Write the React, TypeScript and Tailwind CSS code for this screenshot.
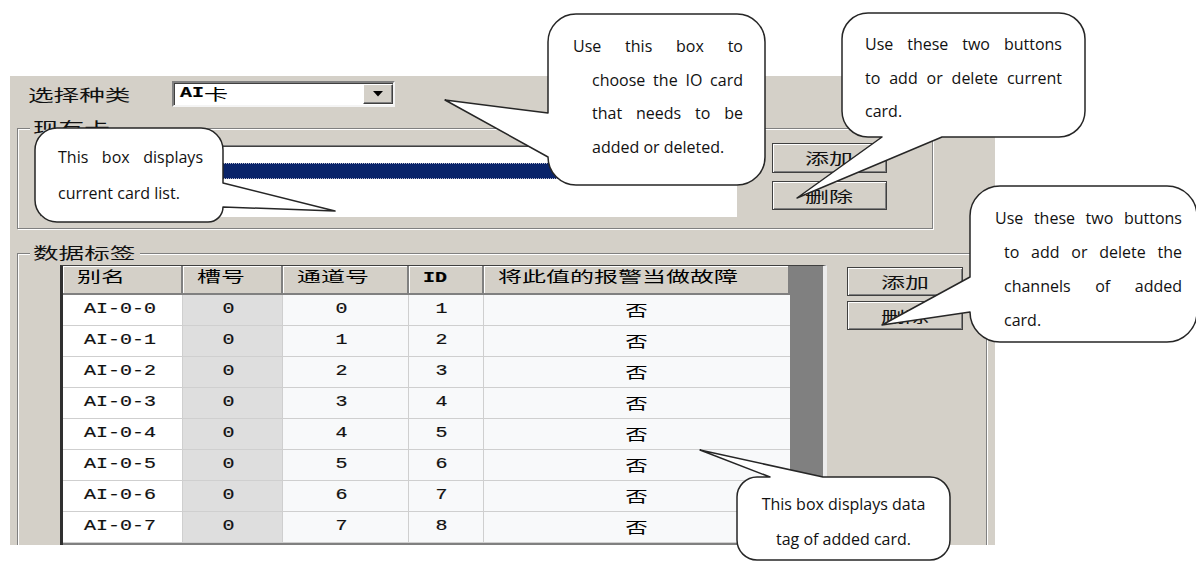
import React from "react";

const CN = "font-['Noto_Sans_CJK_SC',sans-serif]";
const MONO = "font-['Liberation_Mono','Noto_Sans_CJK_SC',monospace] [-webkit-text-stroke:0.2px_#111]";
const NOTE = "font-['Open_Sans','Noto_Sans',sans-serif]";

function Btn({ label, h }: { label: string; h: string }) {
  return (
    <div
      className={`w-full ${h} bg-[#d4d0c8] border border-[#404040] shadow-[inset_1px_1px_0_#ffffff,inset_-1px_-1px_0_#808080] flex items-center justify-center text-[15px] leading-[18px] text-[#111] ${CN}`}
    >
      <span className="inline-block scale-x-[1.6]">{label}</span>
    </div>
  );
}

function GroupLabel({ text, w }: { text: string; w: string }) {
  return (
    <div
      className={`-mt-[10px] ml-[12px] ${w} h-[17px] pl-[3px] bg-[#d4d0c8] text-[16px] leading-[17px] text-[#111] ${CN}`}
    >
      <span className="inline-block origin-left scale-x-[1.6]">{text}</span>
    </div>
  );
}

function Combo() {
  return (
    <div className="w-[223px] h-[26px] bg-white border-2 border-t-[#808080] border-l-[#808080] border-r-[#f4f4f4] border-b-[#f4f4f4] shadow-[inset_1px_1px_0_#404040] flex items-center">
      <div className="pl-[6px] flex items-center leading-[18px] text-black">
        <span className={`inline-block origin-left scale-x-[1.33] w-[24px] text-[15px] font-bold ${MONO}`}>AI</span>
        <span className={`inline-block origin-left scale-x-[1.6] text-[15px] ${CN}`}>卡</span>
      </div>
      <div className="ml-auto w-[30px] h-[20px] bg-[#d4d0c8] border border-t-white border-l-white border-r-[#404040] border-b-[#404040] shadow-[inset_-1px_-1px_0_#808080] flex items-center justify-center">
        <svg width="10" height="6" viewBox="0 0 10 6">
          <polygon points="0,0 10,0 5,5.5" fill="#000" />
        </svg>
      </div>
    </div>
  );
}

function Group1() {
  return (
    <div className="shrink-0 mt-[21px] ml-[7px] w-[916px] h-[101px] border border-[#808080] shadow-[inset_1px_1px_0_#ffffff,1px_1px_0_#ffffff] flex flex-col">
      <GroupLabel text="现有卡" w="w-[84px]" />
      <div className="flex items-start">
        <div className="ml-[22px] mt-[9px] w-[697px] h-[72px] bg-white border border-t-[#808080] border-l-[#808080] border-r-white border-b-white shadow-[inset_1px_1px_0_#404040] pt-[1px] pl-[1px] overflow-hidden">
          <div className={`h-[16px] pl-[4px] text-[14px] leading-[16px] text-black whitespace-nowrap ${CN}`}>
            <span className="inline-block origin-left scale-x-[1.2]">DI卡 数字量输入 槽号:1</span>
          </div>
          <div className={`h-[16px] mr-[1px] pl-[4px] bg-[#0a246a] outline outline-1 outline-dotted outline-[#b8b8c8] -outline-offset-1 text-[14px] leading-[16px] text-white whitespace-nowrap ${CN}`}>
            <span className="inline-block origin-left scale-x-[1.2]">AI卡 模拟量输入(槽号0)</span>
          </div>
        </div>
        <div className="ml-[35px] mt-[7px] w-[115px] flex flex-col gap-[8px]">
          <Btn label="添加" h="h-[30px]" />
          <Btn label="删除" h="h-[29px]" />
        </div>
      </div>
    </div>
  );
}

const cols = [
  { name: "别名", w: "w-[120px]" },
  { name: "槽号", w: "w-[100px]" },
  { name: "通道号", w: "w-[126px]" },
  { name: "ID", w: "w-[75px]" },
  { name: "将此值的报警当做故障", w: "w-[306px]" },
];

function Table() {
  const rows = Array.from({ length: 8 }, (_, i) => i);
  return (
    <div className="ml-[42px] w-[767px] h-[290px] flex border-l-[3px] border-l-[#303030] border-t border-t-[#404040] border-r-[4px] border-r-[#ececec] bg-[#808080]">
      <div className="w-[727px] shrink-0 flex flex-col">
        <div className="flex h-[29px]">
          {cols.map((c) => (
            <div
              key={c.name}
              className={`${c.w} h-[29px] shrink-0 bg-[#d4d0c8] border-b-2 border-b-[#808080] border-r-2 border-r-[#808080] shadow-[inset_1px_1px_0_#ffffff] pl-[14px] pt-[1px] leading-[18px] text-black`}
            >
              {c.name === "ID" ? (
                <span className={`inline-block origin-left scale-x-[1.33] text-[15px] font-bold ${MONO}`}>ID</span>
              ) : (
                <span className={`inline-block origin-left scale-x-[1.6] text-[15px] ${CN}`}>{c.name}</span>
              )}
            </div>
          ))}
        </div>
        {rows.map((i) => (
          <div key={i} className="flex h-[31px]">
            <div className="w-[120px] bg-white border-b border-r border-[#cfcfcf] flex items-center justify-center pr-[4px]">
              <span className={`inline-block scale-x-[1.33] text-[15px] text-[#111] ${MONO}`}>{`AI-0-${i}`}</span>
            </div>
            <div className="w-[100px] bg-[#dedede] border-b border-r border-[#cfcfcf] flex items-center justify-center pr-[8px]">
              <span className={`inline-block scale-x-[1.33] text-[15px] text-[#111] ${MONO}`}>0</span>
            </div>
            <div className="w-[126px] bg-[#f8f9fa] border-b border-r border-[#cfcfcf] flex items-center justify-center pr-[8px]">
              <span className={`inline-block scale-x-[1.33] text-[15px] text-[#111] ${MONO}`}>{i}</span>
            </div>
            <div className="w-[75px] bg-[#f8f9fa] border-b border-r border-[#cfcfcf] flex items-center justify-center pr-[8px]">
              <span className={`inline-block scale-x-[1.33] text-[15px] text-[#111] ${MONO}`}>{i + 1}</span>
            </div>
            <div className="w-[306px] bg-[#f8f9fa] border-b border-[#cfcfcf] flex items-center justify-center">
              <span className={`inline-block scale-x-[1.5] text-[15px] text-black ${CN}`}>否</span>
            </div>
          </div>
        ))}
      </div>
      <div className="w-[33px] shrink-0 bg-[#808080]" />
    </div>
  );
}

function Group2() {
  return (
    <div className="shrink-0 mt-[24px] ml-[7px] w-[970px] h-[320px] border border-[#808080] shadow-[inset_1px_1px_0_#ffffff,1px_1px_0_#ffffff] flex flex-col">
      <GroupLabel text="数据标签" w="w-[110px]" />
      <div className="flex items-start mt-[4px]">
        <Table />
        <div className="ml-[20px] mt-[2px] w-[116px] flex flex-col gap-[5px]">
          <Btn label="添加" h="h-[29px]" />
          <Btn label="删除" h="h-[29px]" />
        </div>
      </div>
    </div>
  );
}

function Callouts() {
  const common = {
    fill: "#ffffff",
    stroke: "#262626",
    strokeWidth: 1.5,
    strokeLinejoin: "round" as const,
  };
  return (
    <>
      <svg
        className="absolute left-0 top-0 pointer-events-none"
        width="1196"
        height="561"
        viewBox="0 0 1196 561"
      >
        <path
          {...common}
          d="M576,14 H737 A28,28 0 0 1 765,42 V157 A28,28 0 0 1 737,185 H576 A28,28 0 0 1 548,157 L445,100 L548,113 V42 A28,28 0 0 1 576,14 Z"
        />
        <path
          {...common}
          d="M868,13 H1059 A26,26 0 0 1 1085,39 V111 A26,26 0 0 1 1059,137 H942 L797,198 L882,137 H868 A26,26 0 0 1 842,111 V39 A26,26 0 0 1 868,13 Z"
        />
        <path
          {...common}
          d="M1000,186 H1167 A30,30 0 0 1 1197,216 V312 A30,30 0 0 1 1167,342 H1000 A30,30 0 0 1 970,312 L882,325 L970,277 V216 A30,30 0 0 1 1000,186 Z"
        />
        <path
          {...common}
          d="M57,128 H201 A22,22 0 0 1 223,150 V183 L335,211 L223,207 A15,15 0 0 1 208,222 H57 A22,22 0 0 1 35,200 V150 A22,22 0 0 1 57,128 Z"
        />
        <path
          {...common}
          d="M757,477 H770 L700,450 L823,477 H930 A20,20 0 0 1 950,497 V540 A20,20 0 0 1 930,560 H757 A20,20 0 0 1 737,540 V497 A20,20 0 0 1 757,477 Z"
        />
      </svg>

      <div className={`absolute left-[573px] top-[30px] w-[170px] text-[16px] leading-[33.5px] text-[#111] ${NOTE}`}>
        <div className="text-justify [text-align-last:justify]">Use this box to</div>
        <div className="pl-[19px] text-justify [text-align-last:justify]">choose the IO card</div>
        <div className="pl-[19px] text-justify [text-align-last:justify]">that needs to be</div>
        <div className="pl-[19px]">added or deleted.</div>
      </div>

      <div className={`absolute left-[865px] top-[28px] w-[197px] text-[16px] leading-[33.5px] text-[#111] ${NOTE}`}>
        <div className="text-justify [text-align-last:justify]">Use these two buttons</div>
        <div className="text-justify [text-align-last:justify]">to add or delete current</div>
        <div>card.</div>
      </div>

      <div className={`absolute left-[995px] top-[201px] w-[187px] text-[16px] leading-[34px] text-[#111] ${NOTE}`}>
        <div className="text-justify [text-align-last:justify]">Use these two buttons</div>
        <div className="pl-[9px] text-justify [text-align-last:justify]">to add or delete the</div>
        <div className="pl-[9px] text-justify [text-align-last:justify]">channels of added</div>
        <div className="pl-[9px]">card.</div>
      </div>

      <div className={`absolute left-[58px] top-[139px] w-[145px] text-[16px] leading-[36px] text-[#111] ${NOTE}`}>
        <div className="text-justify [text-align-last:justify]">This box displays</div>
        <div>current card list.</div>
      </div>

      <div className={`absolute left-[737px] top-[487px] w-[213px] text-center text-[16px] leading-[35px] text-[#111] ${NOTE}`}>
        <div>This box displays data</div>
        <div>tag of added card.</div>
      </div>
    </>
  );
}

export default function App() {
  return (
    <div className="relative w-[1196px] h-[561px] bg-white overflow-hidden">
      <div className="ml-[10px] mt-[76px] w-[985px] h-[469px] bg-[#d4d0c8] overflow-hidden flex flex-col">
        <div className="shrink-0 mt-[5px] h-[26px] flex items-center">
          <div className={`w-[162px] pl-[18px] text-[16px] leading-[17px] text-[#111] ${CN}`}>
            <span className="inline-block origin-left scale-x-[1.6]">选择种类</span>
          </div>
          <Combo />
        </div>
        <Group1 />
        <Group2 />
      </div>
      <Callouts />
    </div>
  );
}
